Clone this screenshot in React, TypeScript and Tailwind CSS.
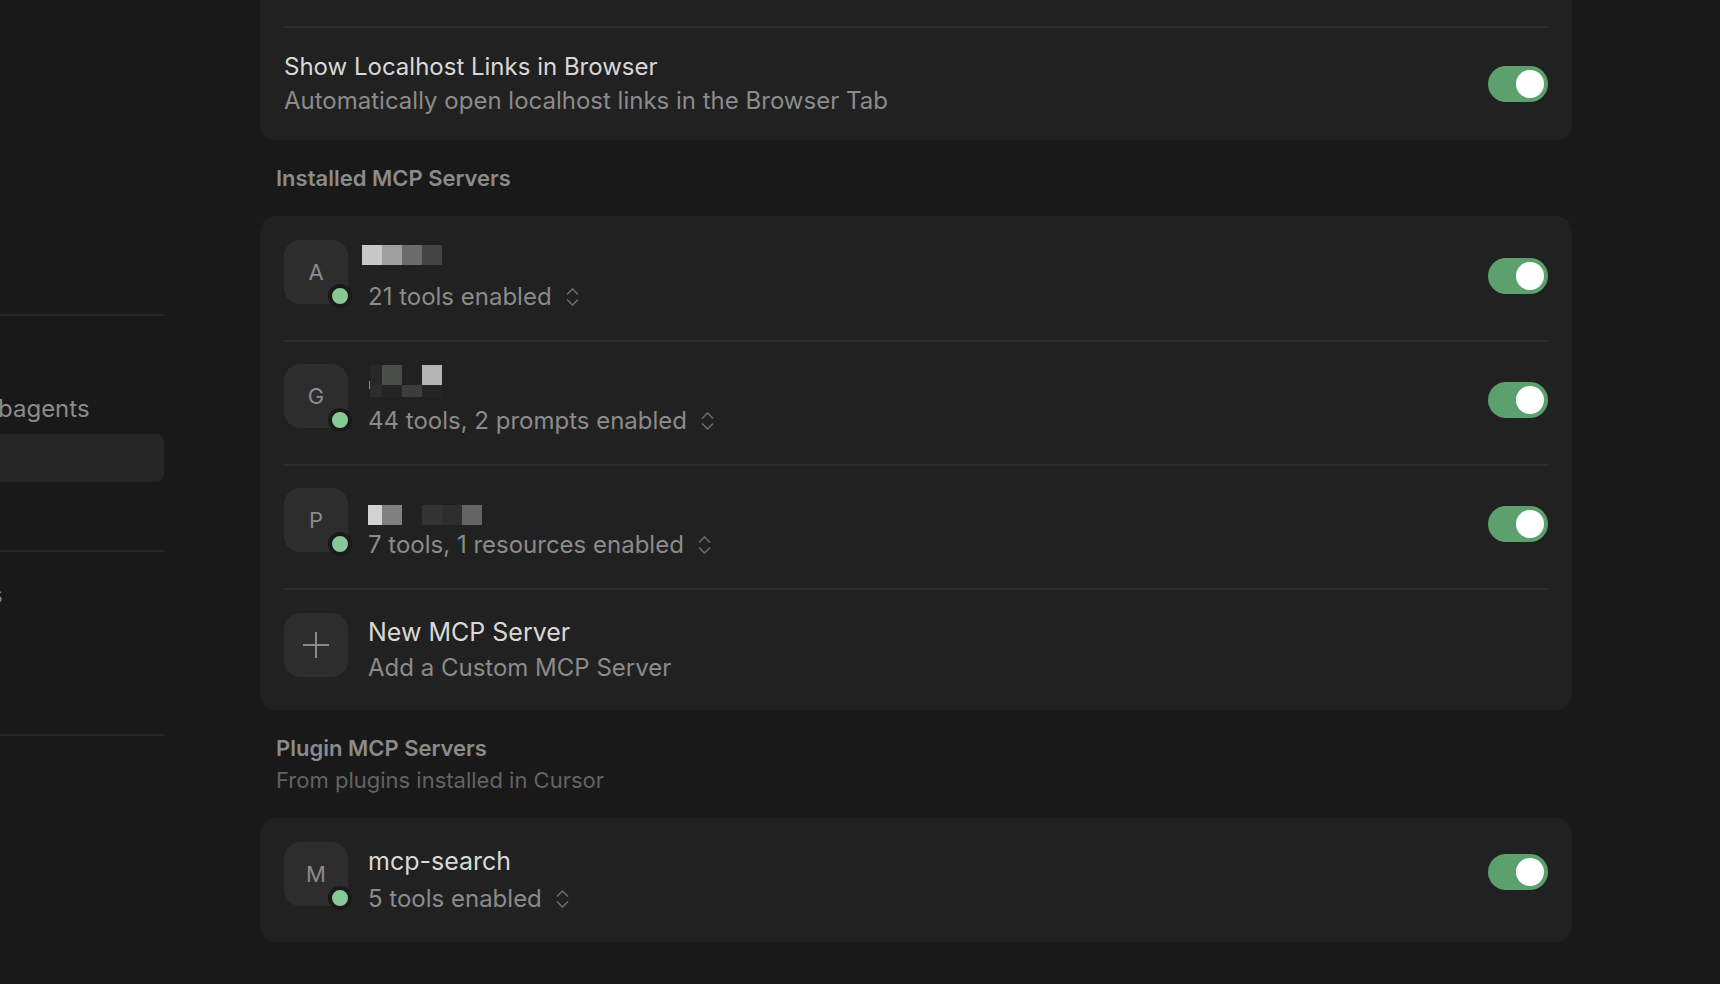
import { useState } from "react";
import type { ReactNode } from "react";

type Block = { x: number; y: number; w: number; h: number; fill: string };

type Server = {
  letter: string;
  label: string;
  name?: string;
  blocks?: Block[];
  summary: string;
};

const installed: Server[] = [
  {
    letter: "A",
    label: "Server A",
    blocks: [
      { x: 0, y: 4, w: 20, h: 20, fill: "#c8c8c8" },
      { x: 20, y: 4, w: 20, h: 20, fill: "#a0a0a0" },
      { x: 40, y: 4, w: 20, h: 20, fill: "#6a6c6a" },
      { x: 60, y: 4, w: 20, h: 20, fill: "#434543" },
    ],
    summary: "21 tools enabled",
  },
  {
    letter: "G",
    label: "Server G",
    blocks: [
      { x: 8, y: 0, w: 12, h: 20, fill: "#272727" },
      { x: 20, y: 0, w: 20, h: 20, fill: "#4a4c4a" },
      { x: 60, y: 0, w: 20, h: 20, fill: "#b4b4b4" },
      { x: 7, y: 16, w: 1, h: 8, fill: "#8a8a8a" },
      { x: 8, y: 20, w: 12, h: 12, fill: "#2d2d2d" },
      { x: 20, y: 20, w: 20, h: 12, fill: "#252525" },
      { x: 40, y: 20, w: 20, h: 12, fill: "#3c3e3c" },
      { x: 60, y: 20, w: 20, h: 12, fill: "#252525" },
    ],
    summary: "44 tools, 2 prompts enabled",
  },
  {
    letter: "P",
    label: "Server P",
    blocks: [
      { x: 6, y: 16, w: 14, h: 20, fill: "#d2d2d2" },
      { x: 20, y: 16, w: 20, h: 20, fill: "#808080" },
      { x: 60, y: 16, w: 20, h: 20, fill: "#343434" },
      { x: 80, y: 16, w: 20, h: 20, fill: "#2e2e2e" },
      { x: 100, y: 16, w: 20, h: 20, fill: "#636563" },
    ],
    summary: "7 tools, 1 resources enabled",
  },
];

const plugins: Server[] = [
  { letter: "M", label: "mcp-search", name: "mcp-search", summary: "5 tools enabled" },
];

function Toggle({ label }: { label: string }) {
  const [on, setOn] = useState(true);
  return (
    <input
      type="checkbox"
      role="switch"
      aria-label={label}
      checked={on}
      onChange={(e) => setOn(e.target.checked)}
      className="h-9 w-15 shrink-0 cursor-pointer appearance-none rounded-full bg-[#444444] p-1 before:block before:size-7 before:rounded-full before:bg-white checked:bg-[#5ca06e] checked:before:translate-x-6"
    />
  );
}

function Avatar({ children, online }: { children: ReactNode; online?: boolean }) {
  return (
    <div className="relative flex size-16 shrink-0 items-center justify-center rounded-2xl bg-[#2d2d2d] text-[22px] text-[#8b8b8b]">
      {children}
      {online && (
        <span className="absolute -right-1 -bottom-1 size-6 rounded-full border-4 border-[#191919] bg-[#88c796]" />
      )}
    </div>
  );
}

function ChevronUpDown() {
  return (
    <svg width="13" height="18" viewBox="0 0 13 18" fill="none" stroke="#6a6a6a" strokeWidth="1.6" aria-hidden="true">
      <path d="M1 6.5 6.5 1 12 6.5M1 11.5 6.5 17l5.5-5.5" />
    </svg>
  );
}

function ServerRow({ server, toggleBox }: { server: Server; toggleBox: string }) {
  return (
    <li className="flex gap-5 pt-[22px] pb-[25px]">
      <Avatar online>{server.letter}</Avatar>
      <div className="min-w-0 flex-1 pt-px">
        <div className="h-9 text-[25px] leading-9 text-[#d8d8d8]">
          {server.name}
          {server.blocks && (
            <svg
              className="-ml-1.5 overflow-visible"
              width="120"
              height="36"
              shapeRendering="crispEdges"
              role="img"
              aria-label={server.label}
            >
              {server.blocks.map((b, i) => (
                <rect key={i} x={b.x} y={b.y} width={b.w} height={b.h} fill={b.fill} />
              ))}
            </svg>
          )}
        </div>
        <button type="button" className="mt-0.5 flex items-center gap-3.5 text-2xl leading-9 text-[#8b8b8b]">
          {server.summary}
          <ChevronUpDown />
        </button>
      </div>
      <div className={`flex items-center ${toggleBox}`}>
        <Toggle label={server.label} />
      </div>
    </li>
  );
}

function Sidebar() {
  return (
    <nav className="w-[164px] shrink-0 overflow-hidden pt-[314px] text-2xl text-[#8b8b8b]">
      <div className="flex flex-col gap-0.5 border-t-2 border-[#262626] py-[18px]">
        <div className="h-12" />
        <a href="#subagents" className="-ml-0.5 flex h-12 items-center pt-0.5">
          bagents
        </a>
        <a href="#tools" aria-current="page" className="h-12 rounded-r-lg bg-[#262626]" />
        <div className="h-12" />
      </div>
      <div className="flex flex-col gap-0.5 border-t-2 border-[#262626] pt-[18px] pb-4">
        <a href="#docs" className="-ml-2.5 flex h-12 items-center pt-0.5">
          s
        </a>
        <div className="h-12" />
        <div className="h-12" />
      </div>
      <div className="border-t-2 border-[#262626]" />
    </nav>
  );
}

export default function App() {
  return (
    <div className="flex min-h-screen bg-[#191919] font-['Inter',sans-serif]">
      <Sidebar />
      <main className="min-w-0 flex-1 pr-[148px] pl-24">
        <section className="rounded-b-2xl bg-[#212121] px-6 pt-[26px]">
          <div className="flex items-center justify-between border-t-2 border-[#2d2d2d] py-[22px]">
            <div>
              <h3 className="text-2xl leading-[34px] text-[#d8d8d8]">Show Localhost Links in Browser</h3>
              <p className="text-2xl leading-[34px] text-[#8b8b8b]">
                Automatically open localhost links in the Browser Tab
              </p>
            </div>
            <Toggle label="Show Localhost Links in Browser" />
          </div>
        </section>

        <div className="px-4 py-[22px]">
          <h2 className="text-[22px] leading-8 font-semibold text-[#8b8b8b]">Installed MCP Servers</h2>
        </div>
        <section className="rounded-2xl bg-[#212121] px-6">
          <ul className="divide-y-2 divide-[#2d2d2d] pt-0.5">
            {installed.map((s) => (
              <ServerRow key={s.letter} server={s} toggleBox="h-[72px]" />
            ))}
            <li className="pt-[23px] pb-6">
              <button type="button" className="flex w-full gap-5 text-left">
                <Avatar>
                  <svg width="26" height="26" viewBox="0 0 26 26" stroke="currentColor" strokeWidth="2" aria-hidden="true">
                    <path d="M13 0v26M0 13h26" />
                  </svg>
                </Avatar>
                <span className="flex flex-col pt-px">
                  <span className="text-[25px] leading-9 text-[#d8d8d8]">New MCP Server</span>
                  <span className="text-2xl leading-9 text-[#8b8b8b]">Add a Custom MCP Server</span>
                </span>
              </button>
            </li>
          </ul>
        </section>

        <div className="px-4 py-[22px]">
          <h2 className="text-[22px] leading-8 font-semibold text-[#8b8b8b]">Plugin MCP Servers</h2>
          <p className="text-[22px] leading-8 text-[#636363]">From plugins installed in Cursor</p>
        </div>
        <section className="rounded-2xl bg-[#212121] px-6">
          <ul className="pt-0.5">
            {plugins.map((s) => (
              <ServerRow key={s.letter} server={s} toggleBox="h-[60px]" />
            ))}
          </ul>
        </section>
      </main>
    </div>
  );
}
